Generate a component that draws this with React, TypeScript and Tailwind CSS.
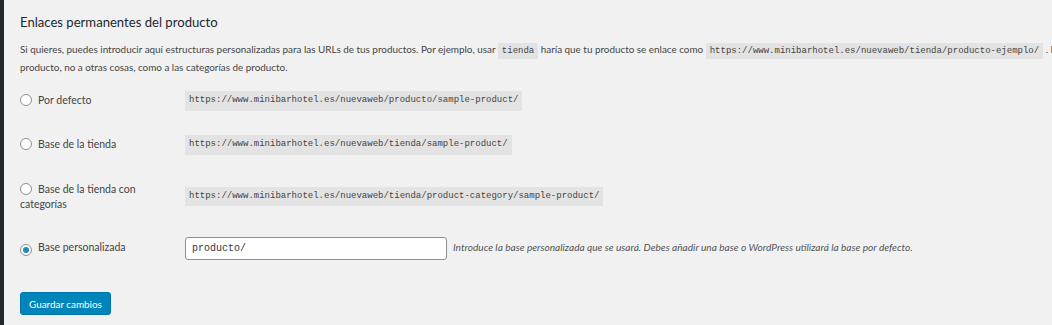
import React from "react";

const sans = { fontFamily: 'Lato, "Open Sans", sans-serif' };

function Radio({ checked }: { checked?: boolean }) {
  return (
    <span className="inline-flex items-center justify-center w-[12px] h-[12px] rounded-full border border-[#8c8f94] bg-white shrink-0 align-[-2px] mr-[6px]">
      {checked && <span className="block w-[6px] h-[6px] rounded-full bg-[#1e8cbe]" />}
    </span>
  );
}

function Code({ children }: { children: React.ReactNode }) {
  return (
    <code className="bg-[#e3e3e3] px-[4px] py-[3px] text-[9px] text-[#444] [font-family:'Liberation_Mono',monospace]">
      {children}
    </code>
  );
}

export default function App() {
  return (
    <div className="w-[1052px] h-[325px] overflow-hidden flex bg-[#f1f1f1]" style={sans}>
      <div className="w-[4px] shrink-0 bg-[#23282d]" />
      <div className="flex-1 pl-[16px] text-[#444] text-[9.9px]">
        <h2 className="text-[13.1px] text-[#23282d] mt-[13px] leading-[18px]">Enlaces permanentes del producto</h2>
        <div className="mt-[10px] leading-[16px] whitespace-nowrap">
          <div>
            Si quieres, puedes introducir aquí estructuras personalizadas para las URLs de tus productos. Por ejemplo, usar{" "}
            <Code>tienda</Code> haría que tu producto se enlace como{" "}
            <Code>https://www.minibarhotel.es/nuevaweb/tienda/producto-ejemplo/</Code> . Esta configuración solo afecta a las URLs de
          </div>
          <div>producto, no a otras cosas, como a las categorías de producto.</div>
        </div>

        <div className="mt-[4px] text-[10.5px]">
          <div className="flex items-center h-[44px]">
            <label className="w-[165px] shrink-0"><Radio />Por defecto</label>
            <Code>https://www.minibarhotel.es/nuevaweb/producto/sample-product/</Code>
          </div>
          <div className="flex items-center h-[44px]">
            <label className="w-[165px] shrink-0"><Radio />Base de la tienda</label>
            <Code>https://www.minibarhotel.es/nuevaweb/tienda/sample-product/</Code>
          </div>
          <div className="flex items-center h-[59px]">
            <label className="w-[165px] shrink-0 pr-[45px] leading-[15px]"><Radio />Base de la tienda con categorías</label>
            <Code>https://www.minibarhotel.es/nuevaweb/tienda/product-category/sample-product/</Code>
          </div>
          <div className="flex items-center h-[44px]">
            <label className="w-[165px] shrink-0"><Radio checked />Base personalizada</label>
            <div className="w-[262px] h-[23px] bg-white border border-[#8c8f94] rounded-[3px] flex items-center px-[6px] text-[10px] text-[#32373c] [font-family:'Liberation_Mono',monospace]">
              producto/
            </div>
            <span className="ml-[6px] italic text-[10.1px] text-[#555]">
              Introduce la base personalizada que se usará. Debes añadir una base o WordPress utilizará la base por defecto.
            </span>
          </div>
        </div>

        <button className="mt-[22px] h-[23px] px-[8px] rounded-[3px] bg-[#0085ba] border border-[#0073aa] text-white text-[9.9px] leading-[20px]">
          Guardar cambios
        </button>
      </div>
    </div>
  );
}
